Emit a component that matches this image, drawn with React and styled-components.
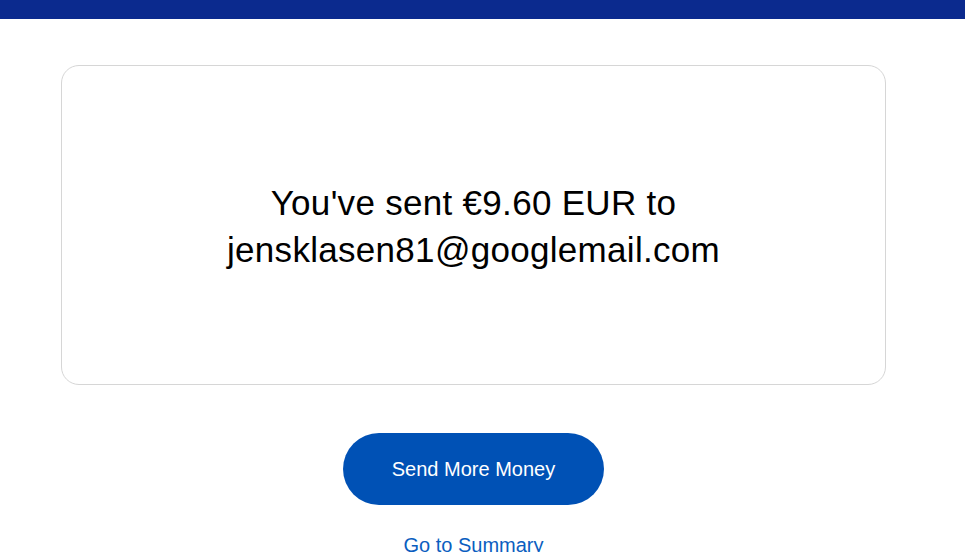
import React from 'react';
import styled, { createGlobalStyle } from 'styled-components';

const GlobalStyle = createGlobalStyle`
  html, body {
    margin: 0;
    padding: 0;
    background: #ffffff;
  }
  body {
    font-family: "Liberation Sans", Arial, sans-serif;
    overflow: hidden;
  }
`;

const TopBar = styled.div`
  height: 19px;
  background-color: #0b2a8e;
`;

const Main = styled.main`
  display: flex;
  flex-direction: column;
  align-items: center;
  padding: 46px 79px 0 61px;
`;

const Card = styled.section`
  box-sizing: border-box;
  width: 100%;
  height: 320px;
  border: 1px solid #d6d6d6;
  border-radius: 18px;
  display: flex;
  align-items: center;
  justify-content: center;
  padding-top: 2px;
`;

const Message = styled.h1`
  margin: 0;
  font-family: "Liberation Sans", Arial, sans-serif;
  font-weight: 400;
  font-size: 35px;
  line-height: 47px;
  letter-spacing: 0.3px;
  color: #000000;
  text-align: center;
`;

const PrimaryButton = styled.button`
  margin-top: 48px;
  width: 261px;
  height: 72px;
  border: 0;
  border-radius: 36px;
  background-color: #0051b5;
  color: #ffffff;
  font-family: "Liberation Sans", Arial, sans-serif;
  font-size: 20px;
  cursor: pointer;
`;

const TextLink = styled.a`
  margin-top: 28px;
  font-size: 20px;
  line-height: 24px;
  color: #0b5ec0;
  text-decoration: none;
  cursor: pointer;
`;

export default function App() {
  return (
    <>
      <GlobalStyle />
      <TopBar />
      <Main>
        <Card>
          <Message>
            You've sent €9.60 EUR to
            <br />
            jensklasen81@googlemail.com
          </Message>
        </Card>
        <PrimaryButton type="button">Send More Money</PrimaryButton>
        <TextLink href="#">Go to Summary</TextLink>
      </Main>
    </>
  );
}
